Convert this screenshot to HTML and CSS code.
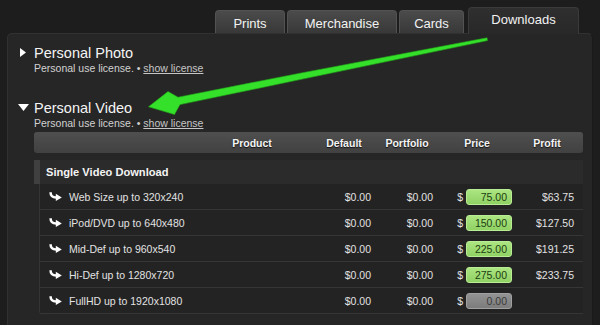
FILE: index.html
```html
<!DOCTYPE html>
<html>
<head>
<meta charset="utf-8">
<link rel="stylesheet" href="styles.css">
</head>
<body>
<nav class="tabs">
  <div class="tab t-prints">Prints</div>
  <div class="tab t-merch">Merchandise</div>
  <div class="tab t-cards">Cards</div>
  <div class="tab active t-down">Downloads</div>
</nav>
<main class="panel">
  <section class="lic">
    <div class="tog"><svg class="tri-r" width="6" height="9" viewBox="0 0 6 9"><polygon points="0,0 6,4.5 0,9" fill="#fff"/></svg></div>
    <div class="lic-body">
      <h2 class="lic-title">Personal Photo</h2>
      <p class="lic-sub">Personal use license. • <a href="#">show license</a></p>
    </div>
  </section>
  <section class="lic">
    <div class="tog"><svg class="tri-d" width="11" height="7" viewBox="0 0 11 7"><polygon points="0,0 11,0 5.5,7" fill="#fff"/></svg></div>
    <div class="lic-body">
      <h2 class="lic-title">Personal Video</h2>
      <p class="lic-sub">Personal use license. • <a href="#">show license</a></p>
      <div class="table">
        <div class="thead">
          <span class="h-prod">Product</span><span class="h-def">Default</span><span class="h-port">Portfolio</span><span class="h-price">Price</span><span class="h-profit">Profit</span>
        </div>
        <div class="group">Single Video Download</div>
        <div class="rows">
          <div class="row">
            <span class="name"><svg class="ico" width="13" height="9" viewBox="0 0 13 9"><path d="M1.6 0.3 Q1.4 5.4 7.2 5.4" stroke="#fff" stroke-width="2.5" fill="none"/><polygon points="6.8,1.8 12.8,5.4 6.8,9" fill="#fff"/></svg>Web Size up to 320x240</span>
            <span class="num">$0.00</span><span class="num">$0.00</span>
            <span class="price">$<span class="inp">75.00</span></span>
            <span class="num">$63.75</span>
          </div>
          <div class="row">
            <span class="name"><svg class="ico" width="13" height="9" viewBox="0 0 13 9"><path d="M1.6 0.3 Q1.4 5.4 7.2 5.4" stroke="#fff" stroke-width="2.5" fill="none"/><polygon points="6.8,1.8 12.8,5.4 6.8,9" fill="#fff"/></svg>iPod/DVD up to 640x480</span>
            <span class="num">$0.00</span><span class="num">$0.00</span>
            <span class="price">$<span class="inp">150.00</span></span>
            <span class="num">$127.50</span>
          </div>
          <div class="row">
            <span class="name"><svg class="ico" width="13" height="9" viewBox="0 0 13 9"><path d="M1.6 0.3 Q1.4 5.4 7.2 5.4" stroke="#fff" stroke-width="2.5" fill="none"/><polygon points="6.8,1.8 12.8,5.4 6.8,9" fill="#fff"/></svg>Mid-Def up to 960x540</span>
            <span class="num">$0.00</span><span class="num">$0.00</span>
            <span class="price">$<span class="inp">225.00</span></span>
            <span class="num">$191.25</span>
          </div>
          <div class="row">
            <span class="name"><svg class="ico" width="13" height="9" viewBox="0 0 13 9"><path d="M1.6 0.3 Q1.4 5.4 7.2 5.4" stroke="#fff" stroke-width="2.5" fill="none"/><polygon points="6.8,1.8 12.8,5.4 6.8,9" fill="#fff"/></svg>Hi-Def up to 1280x720</span>
            <span class="num">$0.00</span><span class="num">$0.00</span>
            <span class="price">$<span class="inp">275.00</span></span>
            <span class="num">$233.75</span>
          </div>
          <div class="row">
            <span class="name"><svg class="ico" width="13" height="9" viewBox="0 0 13 9"><path d="M1.6 0.3 Q1.4 5.4 7.2 5.4" stroke="#fff" stroke-width="2.5" fill="none"/><polygon points="6.8,1.8 12.8,5.4 6.8,9" fill="#fff"/></svg>FullHD up to 1920x1080</span>
            <span class="num">$0.00</span><span class="num">$0.00</span>
            <span class="price">$<span class="inp off">0.00</span></span>
            <span class="num"></span>
          </div>
        </div>
      </div>
    </div>
  </section>
</main>
<svg class="callout" width="600" height="325" viewBox="0 0 600 325">
  <polygon points="487,37.8 300,73.2 178,97.2 168,91.5 148.5,106.8 174.5,114.5 180,104.6 300,79.6 487.5,40.6" fill="#35e02a" stroke="#22a81a" stroke-width="0.6" stroke-linejoin="round"/>
</svg>
</body>
</html>
```

FILE: styles.css
```css
html, body {
  margin: 0;
  padding: 0;
}
body {
  width: 600px;
  height: 325px;
  overflow: hidden;
  position: relative;
  background: #1d1d1d;
  font-family: "Liberation Sans", Arial, Helvetica, sans-serif;
  color: #fff;
}

.tabs {
  display: flex;
  justify-content: flex-end;
  align-items: flex-end;
  gap: 2px;
  height: 33px;
  padding-right: 21px;
  box-sizing: border-box;
}
.tab {
  box-sizing: border-box;
  height: 23px;
  padding-top: 5px;
  font-size: 13px;
  line-height: 15px;
  text-align: center;
  color: #f2f2f2;
  background: linear-gradient(#4b4b4b, #383838);
  border: 1px solid #525252;
  border-bottom: none;
  border-radius: 4px 4px 0 0;
}
.t-prints { width: 70px; }
.t-merch { width: 110px; }
.t-cards { width: 65px; }
.t-down { width: 111px; }
.tab.active {
  height: 27px;
  padding-top: 4px;
  margin-left: 2px;
  margin-bottom: -1px;
  background: linear-gradient(#2f2f2f, #282828);
  border-color: #3a3a3a;
  position: relative;
  z-index: 1;
}

.panel {
  display: block;
  margin-left: 7px;
  width: 586px;
  height: 300px;
  box-sizing: border-box;
  background: #262626;
  border: 1px solid #313131;
  border-right-color: #1a1a1a;
  border-radius: 5px 5px 0 0;
  padding: 11px 9px 0 10px;
}

.lic {
  display: grid;
  grid-template-columns: 16px 1fr;
}
.lic + .lic {
  margin-top: 25px;
}
.tog svg {
  display: block;
}
.tri-r {
  margin: 3px 0 0 2px;
}
.tri-d {
  margin: 3.5px 0 0 0;
}
.lic-title {
  margin: 0;
  font-size: 14.5px;
  line-height: 17px;
  font-weight: normal;
  color: #f4f4f4;
}
.lic-sub {
  margin: 0;
  font-size: 10.5px;
  line-height: 13px;
  color: #d2d2d2;
}
.lic-sub a {
  color: #c6c6c6;
  text-decoration: underline;
}

.table {
  margin-top: 2px;
  width: 549px;
}
.thead {
  display: grid;
  grid-template-columns: 178px 80px 22px 60px 3px 60px 10px 60px 10px 60px;
  align-items: center;
  height: 21px;
  background: linear-gradient(#4f4f4f, #414141);
  border-radius: 3px;
  font-size: 10.5px;
  font-weight: bold;
  text-align: center;
  color: #f4f4f4;
  text-shadow: 0 1px 1px #111;
}
.h-prod { grid-column: 2; }
.h-def { grid-column: 4; }
.h-port { grid-column: 6; }
.h-price { grid-column: 8; }
.h-profit { grid-column: 10; }

.group {
  margin-top: 7px;
  height: 24px;
  display: flex;
  align-items: center;
  border-left: 6px solid #404040;
  background: #2b2b2b;
  padding-left: 6px;
  font-size: 11.1px;
  font-weight: bold;
  color: #f4f4f4;
}
.rows {
  margin-left: 5px;
  border-left: 1px solid #343434;
  border-bottom-left-radius: 3px;
  background: #232323;
}
.row {
  display: grid;
  grid-template-columns: 1fr 60px 62px 79px 62px;
  align-items: center;
  height: 26px;
  box-sizing: border-box;
  padding-right: 9px;
  border-bottom: 1px solid #363636;
  font-size: 10.5px;
  color: #e2e2e2;
}
.name {
  display: flex;
  align-items: center;
  gap: 7px;
  padding-left: 9px;
}
.ico {
  display: block;
  flex: none;
}
.num {
  text-align: right;
}
.price {
  display: flex;
  justify-content: flex-end;
  align-items: center;
  gap: 3px;
}
.inp {
  width: 46px;
  height: 16px;
  box-sizing: border-box;
  border: 1px solid #b9ec94;
  border-radius: 3px;
  background: linear-gradient(#abe581, #90d164);
  color: #20400f;
  text-align: right;
  padding-right: 4px;
  font-size: 10.5px;
  line-height: 14px;
}
.inp.off {
  background: linear-gradient(#939393, #7c7c7c);
  border-color: #a0a0a0;
  color: #3a3a3a;
}

.callout {
  position: absolute;
  left: 0;
  top: 0;
  pointer-events: none;
}
```
